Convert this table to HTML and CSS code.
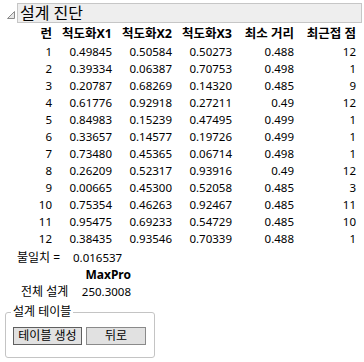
FILE: index.html
```html
<!DOCTYPE html>
<html lang="ko">
<head>
<meta charset="utf-8">
<title>설계 진단</title>
<link rel="stylesheet" href="styles.css">
</head>
<body>
<div class="report">
  <div class="head">
    <svg class="disclosure" width="12" height="12" viewBox="0 0 12 12"><path d="M10.5 3.5 L10.5 10.5 L3.5 10.5 Z" fill="#e6e6e6" stroke="#8a8a8a" stroke-width="1"/></svg>
    <div class="titlebar">설계 진단</div>
  </div>
  <table class="diag">
    <thead>
      <tr><th class="c0">런</th><th class="c1">척도화X1</th><th class="c1">척도화X2</th><th class="c1">척도화X3</th><th class="c2">최소 거리</th><th class="c2">최근접 점</th></tr>
    </thead>
    <tbody>
      <tr><td>1</td><td>0.49845</td><td>0.50584</td><td>0.50273</td><td>0.488</td><td>12</td></tr>
      <tr><td>2</td><td>0.39334</td><td>0.06387</td><td>0.70753</td><td>0.498</td><td>1</td></tr>
      <tr><td>3</td><td>0.20787</td><td>0.68269</td><td>0.14320</td><td>0.485</td><td>9</td></tr>
      <tr><td>4</td><td>0.61776</td><td>0.92918</td><td>0.27211</td><td>0.49</td><td>12</td></tr>
      <tr><td>5</td><td>0.84983</td><td>0.15239</td><td>0.47495</td><td>0.499</td><td>1</td></tr>
      <tr><td>6</td><td>0.33657</td><td>0.14577</td><td>0.19726</td><td>0.499</td><td>1</td></tr>
      <tr><td>7</td><td>0.73480</td><td>0.45365</td><td>0.06714</td><td>0.498</td><td>1</td></tr>
      <tr><td>8</td><td>0.26209</td><td>0.52317</td><td>0.93916</td><td>0.49</td><td>12</td></tr>
      <tr><td>9</td><td>0.00665</td><td>0.45300</td><td>0.52058</td><td>0.485</td><td>3</td></tr>
      <tr><td>10</td><td>0.75354</td><td>0.46263</td><td>0.92467</td><td>0.485</td><td>11</td></tr>
      <tr><td>11</td><td>0.95475</td><td>0.69233</td><td>0.54729</td><td>0.485</td><td>10</td></tr>
      <tr><td>12</td><td>0.38435</td><td>0.93546</td><td>0.70339</td><td>0.488</td><td>1</td></tr>
    </tbody>
  </table>
  <div class="mismatch"><span class="label">불일치 =</span><span class="num">0.016537</span></div>
  <div class="summary">
    <span></span><span class="colhead">MaxPro</span>
    <span class="label">전체 설계</span><span class="num">250.3008</span>
  </div>
  <fieldset class="group">
    <legend>설계 테이블</legend>
    <div class="buttons">
      <button class="btn primary">테이블 생성</button>
      <button class="btn back">뒤로</button>
    </div>
  </fieldset>
</div>
</body>
</html>
```
FILE: styles.css
```css
html, body {
  margin: 0;
  padding: 0;
  background: #ffffff;
}
body {
  font-family: "Noto Sans", "Noto Sans CJK KR", sans-serif;
  font-size: 12px;
  color: #000;
}
.report {
  width: 364px;
}
.head {
  display: flex;
  align-items: center;
  padding-top: 3px;
}
.disclosure {
  margin-left: 4px;
  margin-top: 2px;
  flex: none;
}
.titlebar {
  flex: 1;
  margin-left: 1px;
  margin-right: 2px;
  height: 18px;
  line-height: 18px;
  border: 1px solid #c6c6c6;
  background: #eeeeee;
  font-size: 16px;
  padding-left: 2px;
  overflow: hidden;
}
.diag {
  border-collapse: collapse;
  margin-left: 20px;
  margin-top: 2px;
}
.diag th, .diag td {
  padding: 0;
  text-align: right;
  white-space: nowrap;
}
.diag th {
  height: 18px;
  font-weight: bold;
  font-size: 12.5px;
  line-height: 18px;
}
.diag td {
  height: 17px;
  line-height: 17px;
  font-size: 11.5px;
}
.c0 { width: 32px; }
.c1 { width: 60px; }
.c2 { width: 62px; }
.num {
  font-size: 11.5px;
}
.mismatch {
  display: grid;
  grid-template-columns: 56px auto;
  padding-left: 17px;
  margin-top: 2px;
  height: 17px;
  line-height: 17px;
}
.summary {
  display: grid;
  grid-template-columns: 56px 54px;
  padding-left: 21px;
  line-height: 17px;
}
.summary .colhead {
  font-weight: bold;
  text-align: right;
}
.summary .num {
  text-align: right;
}
.group {
  box-sizing: border-box;
  width: 150px;
  margin: 5px 0 0 5px;
  padding: 0 7px 12px 7px;
  border: 1px solid #c4c4c4;
  border-radius: 3px;
}
.group legend {
  padding: 0 2px;
  margin-left: -2px;
  line-height: 14px;
}
.buttons {
  display: flex;
  gap: 4px;
  padding-top: 8px;
}
.btn {
  font-family: inherit;
  font-size: 12px;
  height: 18px;
  line-height: 14px;
  padding: 0;
  background: #e1e1e1;
  border: 1px solid #8a8a8a;
  color: #000;
  border-radius: 0;
  white-space: nowrap;
}
.btn.primary {
  width: 69px;
  border-color: #5f5f5f;
}
.btn.back {
  width: 60px;
}
```
